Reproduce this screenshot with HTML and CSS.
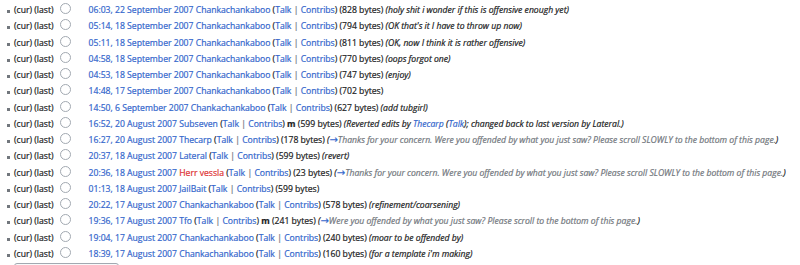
FILE: index.html
```html
<!DOCTYPE html>
<html lang="en">
<head>
    <meta charset="UTF-8">
    <title>Revision history</title>
    <link rel="stylesheet" href="styles.css">
</head>
<body>
    <ul class="history">
        <li><span class="nav">(cur) (last)</span><span class="radio"></span><a href="#">06:03, 22 September 2007</a> <a href="#">Chankachankaboo</a> <span class="user-links">(<a href="#">Talk</a> <span class="sep">|</span> <a href="#">Contribs</a>)</span> (828 bytes) <span class="comment">(holy shit i wonder if this is offensive enough yet)</span></li>
        <li><span class="nav">(cur) (last)</span><span class="radio"></span><a href="#">05:14, 18 September 2007</a> <a href="#">Chankachankaboo</a> <span class="user-links">(<a href="#">Talk</a> <span class="sep">|</span> <a href="#">Contribs</a>)</span> (794 bytes) <span class="comment">(OK that's it I have to throw up now)</span></li>
        <li><span class="nav">(cur) (last)</span><span class="radio"></span><a href="#">05:11, 18 September 2007</a> <a href="#">Chankachankaboo</a> <span class="user-links">(<a href="#">Talk</a> <span class="sep">|</span> <a href="#">Contribs</a>)</span> (811 bytes) <span class="comment">(OK, now I think it is rather offensive)</span></li>
        <li><span class="nav">(cur) (last)</span><span class="radio"></span><a href="#">04:58, 18 September 2007</a> <a href="#">Chankachankaboo</a> <span class="user-links">(<a href="#">Talk</a> <span class="sep">|</span> <a href="#">Contribs</a>)</span> (770 bytes) <span class="comment">(oops forgot one)</span></li>
        <li><span class="nav">(cur) (last)</span><span class="radio"></span><a href="#">04:53, 18 September 2007</a> <a href="#">Chankachankaboo</a> <span class="user-links">(<a href="#">Talk</a> <span class="sep">|</span> <a href="#">Contribs</a>)</span> (747 bytes) <span class="comment">(enjoy)</span></li>
        <li><span class="nav">(cur) (last)</span><span class="radio"></span><a href="#">14:48, 17 September 2007</a> <a href="#">Chankachankaboo</a> <span class="user-links">(<a href="#">Talk</a> <span class="sep">|</span> <a href="#">Contribs</a>)</span> (702 bytes)</li>
        <li><span class="nav">(cur) (last)</span><span class="radio"></span><a href="#">14:50, 6 September 2007</a> <a href="#">Chankachankaboo</a> <span class="user-links">(<a href="#">Talk</a> <span class="sep">|</span> <a href="#">Contribs</a>)</span> (627 bytes) <span class="comment">(add tubgirl)</span></li>
        <li><span class="nav">(cur) (last)</span><span class="radio"></span><a href="#">16:52, 20 August 2007</a> <a href="#">Subseven</a> <span class="user-links">(<a href="#">Talk</a> <span class="sep">|</span> <a href="#">Contribs</a>)</span> <b>m</b> (599 bytes) <span class="comment">(Reverted edits by <a href="#">Thecarp</a> (<a href="#">Talk</a>); changed back to last version by Lateral.)</span></li>
        <li><span class="nav">(cur) (last)</span><span class="radio"></span><a href="#">16:27, 20 August 2007</a> <a href="#">Thecarp</a> <span class="user-links">(<a href="#">Talk</a> <span class="sep">|</span> <a href="#">Contribs</a>)</span> (178 bytes) <span class="comment">(<a href="#" class="arrow">→</a><span class="auto">Thanks for your concern. Were you offended by what you just saw? Please scroll SLOWLY to the bottom of this page.</span>)</span></li>
        <li><span class="nav">(cur) (last)</span><span class="radio"></span><a href="#">20:37, 18 August 2007</a> <a href="#">Lateral</a> <span class="user-links">(<a href="#">Talk</a> <span class="sep">|</span> <a href="#">Contribs</a>)</span> (599 bytes) <span class="comment">(revert)</span></li>
        <li><span class="nav">(cur) (last)</span><span class="radio"></span><a href="#">20:36, 18 August 2007</a> <a href="#" class="new">Herr vessla</a> <span class="user-links">(<a href="#">Talk</a> <span class="sep">|</span> <a href="#">Contribs</a>)</span> (23 bytes) <span class="comment">(<a href="#" class="arrow">→</a><span class="auto">Thanks for your concern. Were you offended by what you just saw? Please scroll SLOWLY to the bottom of this page.</span>)</span></li>
        <li><span class="nav">(cur) (last)</span><span class="radio"></span><a href="#">01:13, 18 August 2007</a> <a href="#">JailBait</a> <span class="user-links">(<a href="#">Talk</a> <span class="sep">|</span> <a href="#">Contribs</a>)</span> (599 bytes)</li>
        <li><span class="nav">(cur) (last)</span><span class="radio"></span><a href="#">20:22, 17 August 2007</a> <a href="#">Chankachankaboo</a> <span class="user-links">(<a href="#">Talk</a> <span class="sep">|</span> <a href="#">Contribs</a>)</span> (578 bytes) <span class="comment">(refinement/coarsening)</span></li>
        <li><span class="nav">(cur) (last)</span><span class="radio"></span><a href="#">19:36, 17 August 2007</a> <a href="#">Tfo</a> <span class="user-links">(<a href="#">Talk</a> <span class="sep">|</span> <a href="#">Contribs</a>)</span> <b>m</b> (241 bytes) <span class="comment">(<a href="#" class="arrow">→</a><span class="auto">Were you offended by what you just saw? Please scroll to the bottom of this page.</span>)</span></li>
        <li><span class="nav">(cur) (last)</span><span class="radio"></span><a href="#">19:04, 17 August 2007</a> <a href="#">Chankachankaboo</a> <span class="user-links">(<a href="#">Talk</a> <span class="sep">|</span> <a href="#">Contribs</a>)</span> (240 bytes) <span class="comment">(moar to be offended by)</span></li>
        <li><span class="nav">(cur) (last)</span><span class="radio"></span><a href="#">18:39, 17 August 2007</a> <a href="#">Chankachankaboo</a> <span class="user-links">(<a href="#">Talk</a> <span class="sep">|</span> <a href="#">Contribs</a>)</span> (160 bytes) <span class="comment">(for a template i'm making)</span></li>
    </ul>
    <button class="compare">Compare selected versions</button>
</body>
</html>
```

FILE: styles.css
```css
body {
    font-family: 'Open Sans', sans-serif;
    font-size: 8.65px;
    color: #202122;
    margin: 0;
    padding: 2px 0 0 0;
    overflow: hidden;
    -webkit-text-stroke: 0.2px currentColor;
}
a {
    color: #3366cc;
    text-decoration: none;
}
a.new {
    color: #d33;
}
.history {
    list-style: none;
    margin: 0;
    padding: 0 0 0 14px;
}
.history li {
    position: relative;
    line-height: 16.27px;
    white-space: nowrap;
}
.history li::before {
    content: '';
    position: absolute;
    left: -7px;
    top: 8px;
    width: 3px;
    height: 3px;
    background: #72777d;
}
.nav {
    margin-right: 6px;
}
.radio {
    display: inline-block;
    width: 9px;
    height: 9px;
    border: 1px solid #a2a9b1;
    border-radius: 50%;
    vertical-align: -1px;
    margin-right: 18px;
}
.sep {
    color: #72777d;
}
.comment {
    font-style: italic;
}
.arrow {
    font-style: normal;
    font-family: 'DejaVu Sans', sans-serif;
    font-size: 10px;
    line-height: 1;
}
.auto {
    color: #72777d;
}
.compare {
    display: block;
    margin: 1px 0 0 14px;
    width: 105px;
    height: 22px;
    border: 1px solid #a2a9b1;
    border-radius: 3px;
    background: #f8f9fa;
    font-family: 'Open Sans', sans-serif;
    font-size: 8.65px;
}
```
